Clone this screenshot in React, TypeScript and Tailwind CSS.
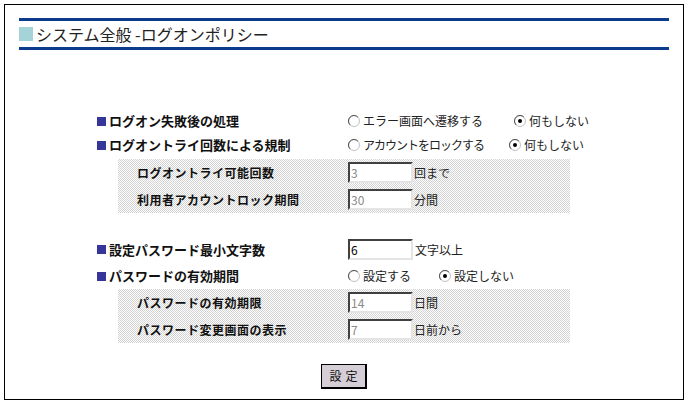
import React from "react";

const font = { fontFamily: '"Noto Sans CJK JP", "Liberation Sans", sans-serif' };

function Radio({ checked }: { checked?: boolean }) {
  return (
    <svg width="12" height="12" viewBox="0 0 12 12" className="shrink-0">
      <circle cx="6" cy="6" r="5.5" fill="#fff" stroke="#c0c0c0" />
      <path d="M2.1 9.9 A5.5 5.5 0 0 1 9.9 2.1" fill="none" stroke="#505050" />
      {checked && <circle cx="6" cy="6" r="2" fill="#000" />}
    </svg>
  );
}

function RadioOpt({ label, checked, className = "" }: { label: string; checked?: boolean; className?: string }) {
  return (
    <span className={"flex items-center gap-[3px] whitespace-nowrap text-[12px] text-[#222] " + className}>
      <Radio checked={checked} />
      {label}
    </span>
  );
}

function Field({ value, disabled }: { value: string; disabled?: boolean }) {
  return (
    <span
      className={
        "flex h-[21px] w-[65px] items-center border-[2px] border-t-[#404040] border-l-[#404040] border-b-[#e4e4e4] border-r-[#e4e4e4] bg-white pl-[1px] text-[12px] " +
        (disabled ? "text-[#8a8a8a]" : "text-black")
      }
    >
      {value}
    </span>
  );
}

function Bullet() {
  return <span className="mr-[3px] inline-block h-[9px] w-[9px] shrink-0 bg-[#36369a]" />;
}

function MainRow({ label, children, h }: { label: string; children: React.ReactNode; h: string }) {
  return (
    <div className={"flex items-center " + h}>
      <div className="flex w-[251px] items-center text-[13px] font-bold text-[#111]">
        <Bullet />
        {label}
      </div>
      <div className="flex items-center">{children}</div>
    </div>
  );
}

function SubRow({ label, value, unit }: { label: string; value: string; unit: string }) {
  return (
    <div className="flex h-[27px] items-center">
      <div className="w-[230px] pl-[19px] text-[12px] font-bold tracking-[0.5px] text-[#111]">{label}</div>
      <Field value={value} disabled />
      <span className="ml-[1px] text-[12px] text-[#222]">{unit}</span>
    </div>
  );
}

function Panel({ children }: { children: React.ReactNode }) {
  return (
    <div className="ml-[21px] w-[452px] bg-[#e6e6e6] bg-[conic-gradient(#d2d2d2_25%,#ffffff_0_50%,#d2d2d2_0_75%,#ffffff_0)] bg-[length:2px_2px]">
      {children}
    </div>
  );
}

export default function App() {
  return (
    <div className="bg-white w-[689px] h-[405px] pt-[4px] pl-[4px]" style={font}>
      <div className="flex h-[396px] w-[680px] flex-col border border-black px-[14px] pt-[13px]">
        <div className="border-y-[3px] border-[#0c3a8c]">
          <div className="flex h-[26px] items-center gap-[3px]">
            <span className="h-[14px] w-[14px] bg-[#a4d4d8]" />
            <span className="text-[16px] leading-none text-[#222]">システム全般 -ログオンポリシー</span>
          </div>
        </div>

        <div className="ml-[78px] mt-[59px] flex flex-col">
          <MainRow label="ログオン失敗後の処理" h="h-[24px]">
            <RadioOpt label="エラー画面へ遷移する" className="w-[166px]" />
            <RadioOpt label="何もしない" checked />
          </MainRow>
          <MainRow label="ログオントライ回数による規制" h="h-[24px]">
            <RadioOpt label="アカウントをロックする" className="w-[161px] tracking-[-1px]" />
            <RadioOpt label="何もしない" checked />
          </MainRow>
          <div className="mt-[2px]">
            <Panel>
              <SubRow label="ログオントライ可能回数" value="3" unit="回まで" />
              <SubRow label="利用者アカウントロック期間" value="30" unit="分間" />
            </Panel>
          </div>

          <div className="mt-[23px]">
            <MainRow label="設定パスワード最小文字数" h="h-[27px]">
              <Field value="6" />
              <span className="ml-[2px] text-[12px] text-[#222]">文字以上</span>
            </MainRow>
            <MainRow label="パスワードの有効期間" h="h-[26px]">
              <RadioOpt label="設定する" className="w-[91px]" />
              <RadioOpt label="設定しない" checked />
            </MainRow>
          </div>
          <Panel>
            <SubRow label="パスワードの有効期限" value="14" unit="日間" />
            <SubRow label="パスワード変更画面の表示" value="7" unit="日前から" />
          </Panel>
        </div>

        <div className="mt-[21px] flex justify-center">
          <button className="h-[25px] w-[46px] border border-black border-r-[2px] border-b-[2px] bg-[#d6ced6] text-[12px] tracking-[4px] pl-[4px] text-[#111]">
            設定
          </button>
        </div>
      </div>
    </div>
  );
}
